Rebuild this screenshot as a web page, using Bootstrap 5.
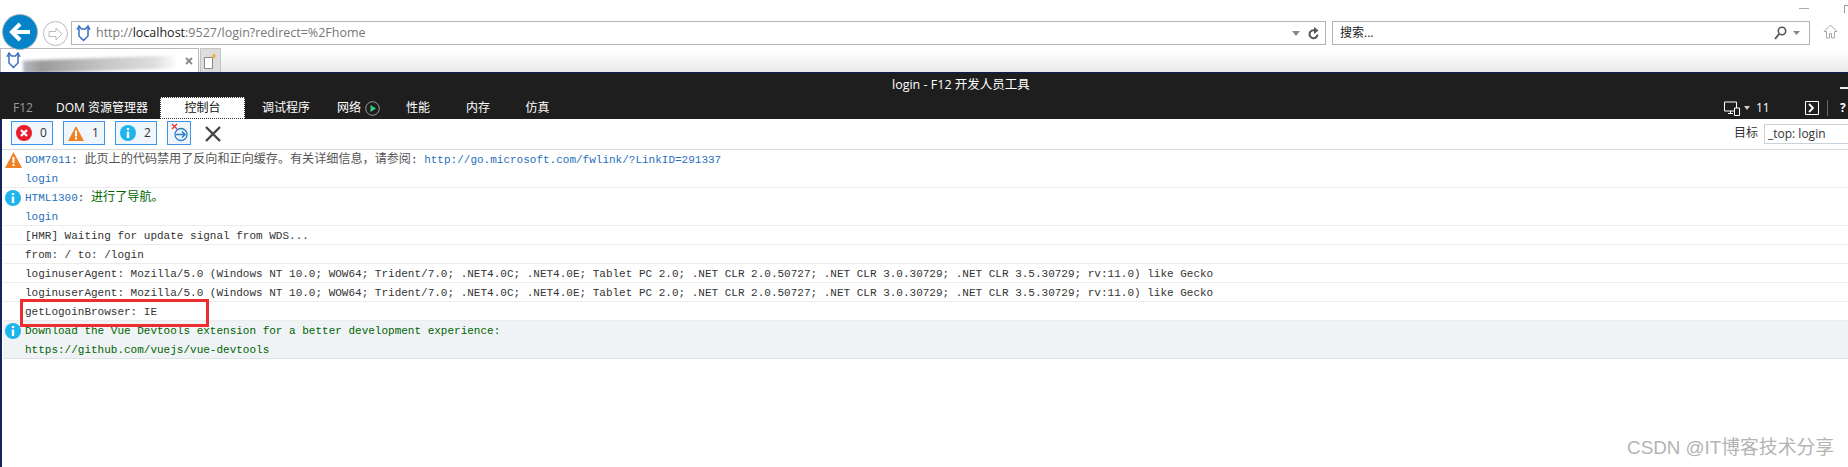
<!DOCTYPE html>
<html lang="zh-CN"><head><meta charset="utf-8">
<link href="https://cdn.jsdelivr.net/npm/bootstrap@5.3.0/dist/css/bootstrap.min.css" rel="stylesheet">
<style>
html,body{height:467px;overflow:hidden;background:#fff}
body{font-family:"Open Sans","Noto Sans CJK SC",sans-serif;font-size:12px;position:relative;color:#222}
.chrome-top{height:72px;background:#fff}
.win-row{height:14px}
.win-min{width:10px;height:1px;background:#aaa;margin-left:1799px;margin-top:8px;flex:none}
.win-res{width:8px;height:8px;border:1px solid #999;margin-left:35px;margin-top:5px;border-bottom:0;flex:none}
.nav-row{height:34px;padding-left:2px}
.back-btn{width:36px;height:36px;border-radius:50%;background:#0583c8;border:1px solid #a7b5bd;flex:none;position:relative;z-index:2}
.fwd-btn{width:25px;height:25px;border-radius:50%;border:1px solid #bbb;flex:none;margin-left:5px;margin-top:7px}
.addr{margin-left:3px;margin-top:7px;height:24px;width:1255px;border:1px solid #b4b4b4;flex:none;padding:0 6px 0 4px;background:#fff}
.addr-text{font-size:12.500px;color:#777;margin-left:5px;white-space:nowrap;line-height:22px}
.addr-text b{font-weight:400;color:#222}
.srch{margin-left:6px;margin-top:7px;height:24px;width:478px;border:1px solid #b4b4b4;flex:none;padding:0 9px 0 7px;font-size:12px;line-height:22px;color:#222}
.home-ic{margin-left:13px;margin-top:10px;flex:none}
.tab-strip{height:24px;background:linear-gradient(#fff 15%,#e8e8e8)}
.ie-tab{width:199px;height:24px;background:#fff;border:1px solid #b9b9b9;border-bottom:0;flex:none;position:relative;padding-left:5px;overflow:hidden}
.blurred{position:absolute;left:22px;top:9px;width:155px;height:13px;background:linear-gradient(90deg,#b5b8c2,#9b9b9b 12%,#c3c3c3 50%,#dedede 85%,#fff);transform:rotate(-2deg);filter:blur(1.500px)}
.new-tab{width:21px;height:24px;background:#ddd;border:1px solid #c4c4c4;border-bottom:0;margin-left:1px;flex:none;padding:3px 0 0 3px}
.devtools{border-left:2px solid #14245a;height:395px}
.dev-head{background:#1e1e1e;height:47px;border-top:1px solid #0d1a52;margin-left:-2px;padding-left:2px;position:relative}
.dev-title{height:24px;color:#fff;font-size:12.500px;line-height:23px;padding-left:890px;white-space:nowrap}
.dev-close-line{position:absolute;left:1840px;top:14px;width:8px;height:2px;background:#eee}
.dev-tabs{height:22px;color:#fff;font-size:12px;line-height:22px;white-space:nowrap}
.dtab{flex:none;text-align:center}
.dtab.on{background:#fff;color:#111;outline:1px dotted #333;outline-offset:-1px;height:22px}
.w-f12{width:42px;padding-left:11px;text-align:left;color:#999}
.w-dom{width:116px}.w-con{width:85px}.w-dbg{width:82px}.w-net{width:63px;padding-left:10px}.w-perf{width:56px}.w-mem{width:64px}.w-emu{width:55px}
.dev-right{margin-left:auto}
.dev-ver{width:49px;margin-left:6px}
.dev-sep{width:1px;height:16px;background:#666;margin:0 12px 0 8px}
.dev-q{display:inline-block;width:8px;overflow:hidden;font-weight:700}
.tool-row{height:31px;padding-left:9px;border-bottom:1px solid #dadada;padding-top:2px;background:#fff}
.tbtn{height:24px;width:42px;border:1px solid #3d94e6;background:#eff6fc;flex:none;font-size:12px;color:#333;padding-left:4px}
.tbtn span{margin-left:8px}
.tbtn+.tbtn{margin-left:10px}
.tbtn.w-nav{width:24px;padding:1px 0 0 3px}
.tb-clear{margin-left:14px;margin-top:5px;flex:none}
.tgt{margin-left:auto;font-size:12px;padding-top:3px;height:25px;color:#333;flex:none}
.tgt-sel{width:84px;height:20px;border:1px solid #c9d2da;border-right:0;margin-left:6px;padding-left:3px;line-height:18px;font-size:12px}
.logs{font-family:"Liberation Mono","Noto Sans CJK SC",monospace;font-size:11px;line-height:21px;color:#333;position:relative;margin-left:1px}
.lrow{border-bottom:1px solid #ececec;padding-left:22px;position:relative;white-space:pre;height:19px}
.lrow.two{height:38px}
.lrow .ic{position:absolute;left:2px;top:2px}
.code,.lnk{color:#1f6fbd}.grn{color:#006400}
.zh{font-size:12.100px}
.zh-grey{color:#555}
.lrow.inf{background:#eff3f6;border-bottom-color:#dde2e6}
.ln{height:19px;line-height:21px}
.redbox{position:absolute;left:17px;top:149px;width:189px;height:28px;border:3px solid #ee2d30}
.mark-wm{position:absolute;right:14px;bottom:5px;font-family:"Liberation Sans","Noto Sans CJK SC",sans-serif;font-size:18.800px;color:#b4b4b4;white-space:nowrap}
</style></head><body>
<div class="chrome-top">
 <div class="d-flex win-row"><div class="win-min"></div><div class="win-res"></div></div>
 <div class="d-flex nav-row">
  <div class="back-btn d-flex align-items-center justify-content-center"><svg width="22" height="20" viewBox="0 0 22 20"><path d="M11 2 3 10l8 8M3 10h18" fill="none" stroke="#fff" stroke-width="4"/></svg></div>
  <div class="fwd-btn d-flex align-items-center justify-content-center"><svg width="15" height="14" viewBox="0 0 15 14"><path d="M8 1l6 6-6 6V9.500H1v-5h7z" fill="none" stroke="#bbb"/></svg></div>
  <div class="addr d-flex align-items-center">
   <svg width="15" height="17" viewBox="0 0 15 17"><path d="M3 1 1.500 4H3v7l4.500 4.500L12 11V4h1.500L12 1 9.500 4h-4z" fill="none" stroke="#3c70c4" stroke-width="1.500"/></svg>
   <div class="addr-text">http://<b>localhost</b>:9527/login?redirect=%2Fhome</div>
   <svg class="ms-auto" style="margin-right:8px" width="8" height="5" viewBox="0 0 8 5"><path d="M0 0h8L4 5z" fill="#888"/></svg>
   <svg width="11" height="13" viewBox="0 0 11 13"><path d="M9.500 7.500a4 4 0 1 1-2.500-4" fill="none" stroke="#555" stroke-width="2"/><path d="M6 0v7l4.500-3.500z" fill="#555"/></svg>
  </div>
  <div class="srch d-flex align-items-center">搜索...
   <svg class="ms-auto" style="margin-right:6px" width="13" height="14" viewBox="0 0 13 14"><circle cx="8" cy="5" r="3.700" fill="none" stroke="#555" stroke-width="1.600"/><path d="M5 8 1 13" stroke="#555" stroke-width="2"/></svg>
   <svg width="7" height="4" viewBox="0 0 7 4"><path d="M0 0h7L3.500 4z" fill="#888"/></svg>
  </div>
  <svg class="home-ic" width="15" height="15" viewBox="0 0 15 15"><path d="M7.500 1 1 7.500h2.500V14h3V9.500h2V14h3V7.500H14z" fill="none" stroke="#aaa"/></svg>
 </div>
 <div class="d-flex tab-strip">
  <div class="ie-tab d-flex align-items-center">
   <svg width="15" height="17" viewBox="0 0 15 17"><path d="M3 1 1.500 4H3v7l4.500 4.500L12 11V4h1.500L12 1 9.500 4h-4z" fill="none" stroke="#3c70c4" stroke-width="1.500"/></svg>
   <div class="blurred"></div>
   <svg class="ms-auto" style="margin-right:5px" width="8" height="8" viewBox="0 0 8 8"><path d="M1 1l6 6M7 1 1 7" stroke="#888" stroke-width="1.800"/></svg>
  </div>
  <div class="new-tab"><svg width="14" height="17" viewBox="0 0 14 17"><path d="M.5 4.500h8v11h-8z" fill="#fff" stroke="#888"/><path d="M10 0l1 2.500 2.500.5-2.500.5-1 2.500-1-2.500L6.500 3 9 2.500z" fill="#f5a623"/></svg></div>
 </div>
</div>
<div class="devtools">
 <div class="dev-head">
  <div class="dev-title">login - F12 开发人员工具</div>
  <div class="dev-close-line"></div>
  <div class="d-flex dev-tabs">
   <div class="dtab w-f12">F12</div>
   <div class="dtab w-dom">DOM 资源管理器</div>
   <div class="dtab on w-con">控制台</div>
   <div class="dtab w-dbg">调试程序</div>
   <div class="dtab w-net d-flex align-items-center">网络<svg class="ms-1" width="15" height="15" viewBox="0 0 15 15"><circle cx="7.500" cy="7.500" r="6.800" fill="none" stroke="#999"/><path d="M5.500 4v7l5.500-3.500z" fill="#2fd07c"/></svg></div>
   <div class="dtab w-perf">性能</div>
   <div class="dtab w-mem">内存</div>
   <div class="dtab w-emu">仿真</div>
   <div class="dev-right d-flex align-items-center">
    <svg width="16" height="15" viewBox="0 0 16 15"><path d="M.5 1h12v9H.5zM4 12.500h5M6.500 10v2" fill="none" stroke="#fff"/><path d="M10.500 7h5v7.500h-5z" fill="#1e1e1e" stroke="#fff"/></svg>
    <svg class="ms-1" width="6" height="4" viewBox="0 0 6 4"><path d="M0 0h6L3 4z" fill="#ccc"/></svg>
    <span class="dev-ver">11</span>
    <svg width="14" height="14" viewBox="0 0 14 14"><path d="M.5.500h13v13H.5z" fill="none" stroke="#fff"/><path d="M4 3l4 4-4 4" fill="none" stroke="#fff" stroke-width="1.800"/></svg>
    <div class="dev-sep"></div>
    <span class="dev-q">?</span>
   </div>
  </div>
 </div>
 <div class="d-flex tool-row">
  <div class="tbtn d-flex align-items-center"><svg width="16" height="16" viewBox="0 0 16 16"><circle cx="8" cy="8" r="8" fill="#e81c2c"/><path d="M5 5l6 6M11 5l-6 6" stroke="#fff" stroke-width="2.400"/></svg><span>0</span></div>
  <div class="tbtn d-flex align-items-center"><svg width="16" height="15" viewBox="0 0 16 15"><path d="M8 0 16 15H0z" fill="#f08024"/><path d="M8 4.500v6M8 11.500v2" stroke="#fff" stroke-width="2"/></svg><span>1</span></div>
  <div class="tbtn d-flex align-items-center"><svg width="16" height="16" viewBox="0 0 16 16"><circle cx="8" cy="8" r="8" fill="#1eb4ec"/><path d="M8 6.500v6.500M8 3v2" stroke="#fff" stroke-width="2.400"/></svg><span>2</span></div>
  <div class="tbtn w-nav"><svg width="17" height="20" viewBox="0 0 17 20"><path d="M1 1l5 5M6 1 1 6" stroke="#e33" stroke-width="1.300"/><circle cx="10" cy="11.500" r="6" fill="none" stroke="#2b7fc9" stroke-width="1.300"/><path d="M5 11.500h9M11 8.500l3 3-3 3" fill="none" stroke="#2b7fc9" stroke-width="1.500"/></svg></div>
  <svg class="tb-clear" width="16" height="16" viewBox="0 0 16 16"><path d="M1 1l14 14M15 1 1 15" stroke="#444" stroke-width="2.400"/></svg>
  <div class="tgt d-flex">目标<div class="tgt-sel">_top: login</div></div>
 </div>
 <div class="logs">
  <div class="lrow two"><svg class="ic" width="17" height="16" viewBox="0 0 17 16"><path d="M8.500 0 17 16H0z" fill="#f08024"/><path d="M8.500 5v6M8.500 12v2" stroke="#fff" stroke-width="2"/></svg><div class="ln"><span class="code">DOM7011</span>: <span class="zh zh-grey">此页上的代码禁用了反向和正向缓存。有关详细信息，请参阅</span>: <span class="lnk">http://go.microsoft.com/fwlink/?LinkID=291337</span></div><div class="ln lnk">login</div></div>
  <div class="lrow two"><svg class="ic" width="16" height="16" viewBox="0 0 16 16"><circle cx="8" cy="8" r="8" fill="#1eb4ec"/><path d="M8 6.500v6.500M8 3v2" stroke="#fff" stroke-width="2.400"/></svg><div class="ln"><span class="code">HTML1300</span>: <span class="grn zh">进行了导航。</span></div><div class="ln lnk">login</div></div>
  <div class="lrow">[HMR] Waiting for update signal from WDS...</div>
  <div class="lrow">from: / to: /login</div>
  <div class="lrow">loginuserAgent: Mozilla/5.0 (Windows NT 10.0; WOW64; Trident/7.0; .NET4.0C; .NET4.0E; Tablet PC 2.0; .NET CLR 2.0.50727; .NET CLR 3.0.30729; .NET CLR 3.5.30729; rv:11.0) like Gecko</div>
  <div class="lrow">loginuserAgent: Mozilla/5.0 (Windows NT 10.0; WOW64; Trident/7.0; .NET4.0C; .NET4.0E; Tablet PC 2.0; .NET CLR 2.0.50727; .NET CLR 3.0.30729; .NET CLR 3.5.30729; rv:11.0) like Gecko</div>
  <div class="lrow">getLogoinBrowser: IE</div>
  <div class="lrow two inf"><svg class="ic" width="16" height="16" viewBox="0 0 16 16"><circle cx="8" cy="8" r="8" fill="#1eb4ec"/><path d="M8 6.500v6.500M8 3v2" stroke="#fff" stroke-width="2.400"/></svg><div class="ln grn">Download the Vue Devtools extension for a better development experience:</div><div class="ln grn">https://github.com/vuejs/vue-devtools</div></div>
  <div class="redbox"></div>
 </div>
</div>
<div class="mark-wm">CSDN @IT博客技术分享</div>
<script src="https://cdn.jsdelivr.net/npm/bootstrap@5.3.0/dist/js/bootstrap.bundle.min.js"></script>
</body></html>
